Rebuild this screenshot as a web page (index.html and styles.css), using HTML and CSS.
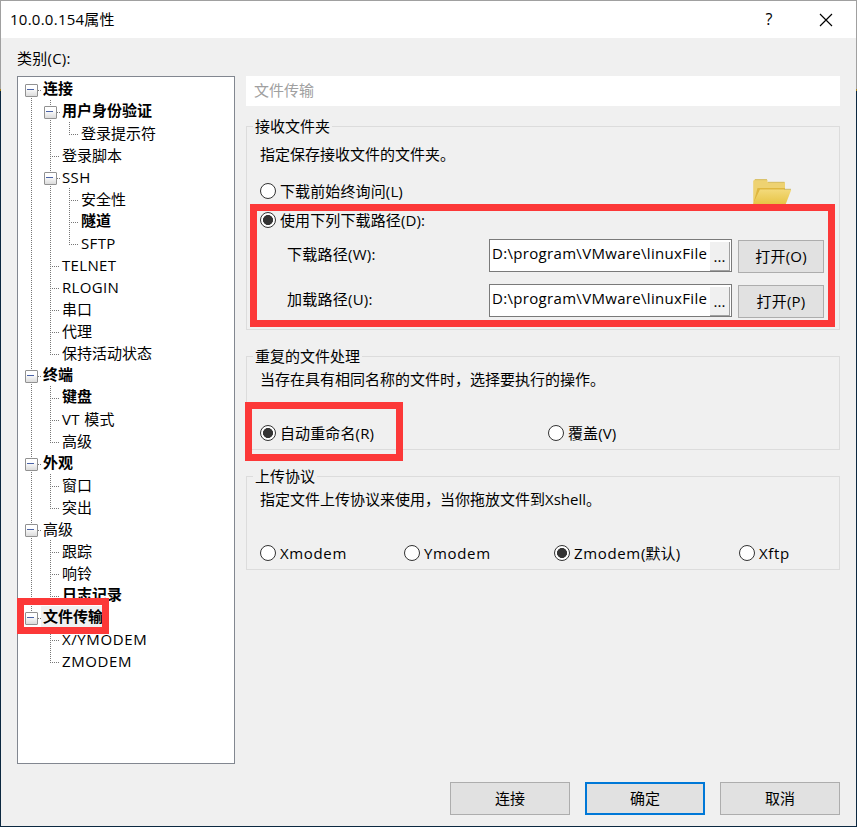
FILE: index.html
```html
<!DOCTYPE html>
<html lang="zh-CN">
<head>
<meta charset="utf-8">
<title>10.0.0.154属性</title>
<link rel="stylesheet" href="styles.css">
</head>
<body>
<div class="window">
  <header class="titlebar">
    <span class="title">10.0.0.154属性</span>
    <span class="help">?</span>
    <svg class="close" width="14" height="14" viewBox="0 0 14 14"><path d="M1 1L13 13M13 1L1 13" stroke="#000" stroke-width="1.15" fill="none"/></svg>
  </header>
  <div class="category">类别(C):</div>
  <main class="content">
    <div class="tree">
      <div class="row bold"><i class="g box first"></i><span>连接</span></div>
      <div class="row bold"><i class="g v"></i><i class="g box"></i><span>用户身份验证</span></div>
      <div class="row"><i class="g v"></i><i class="g v"></i><i class="g end"></i><span>登录提示符</span></div>
      <div class="row"><i class="g v"></i><i class="g tee"></i><span>登录脚本</span></div>
      <div class="row latin"><i class="g v"></i><i class="g box"></i><span>SSH</span></div>
      <div class="row"><i class="g v"></i><i class="g v"></i><i class="g tee"></i><span>安全性</span></div>
      <div class="row bold"><i class="g v"></i><i class="g v"></i><i class="g tee"></i><span>隧道</span></div>
      <div class="row latin"><i class="g v"></i><i class="g v"></i><i class="g end"></i><span>SFTP</span></div>
      <div class="row latin"><i class="g v"></i><i class="g tee"></i><span>TELNET</span></div>
      <div class="row latin"><i class="g v"></i><i class="g tee"></i><span>RLOGIN</span></div>
      <div class="row"><i class="g v"></i><i class="g tee"></i><span>串口</span></div>
      <div class="row"><i class="g v"></i><i class="g tee"></i><span>代理</span></div>
      <div class="row"><i class="g v"></i><i class="g end"></i><span>保持活动状态</span></div>
      <div class="row bold"><i class="g box"></i><span>终端</span></div>
      <div class="row bold"><i class="g v"></i><i class="g tee"></i><span>键盘</span></div>
      <div class="row latin"><i class="g v"></i><i class="g tee"></i><span>VT 模式</span></div>
      <div class="row"><i class="g v"></i><i class="g end"></i><span>高级</span></div>
      <div class="row bold"><i class="g box"></i><span>外观</span></div>
      <div class="row"><i class="g v"></i><i class="g tee"></i><span>窗口</span></div>
      <div class="row"><i class="g v"></i><i class="g end"></i><span>突出</span></div>
      <div class="row"><i class="g box"></i><span>高级</span></div>
      <div class="row"><i class="g v"></i><i class="g tee"></i><span>跟踪</span></div>
      <div class="row"><i class="g v"></i><i class="g tee"></i><span>响铃</span></div>
      <div class="row bold"><i class="g v"></i><i class="g end"></i><span>日志记录</span></div>
      <div class="row bold selected"><i class="g box last"></i><span>文件传输</span></div>
      <div class="row modem"><i class="g"></i><i class="g tee"></i><span>X/YMODEM</span></div>
      <div class="row modem"><i class="g"></i><i class="g end"></i><span>ZMODEM</span></div>
      <div class="mark mark-tree"></div>
    </div>
    <div class="panel">
      <div class="heading">文件传输</div>
      <section class="group receive">
        <div class="legend">接收文件夹</div>
        <p class="desc">指定保存接收文件的文件夹。</p>
        <label class="radio ask"><i></i>下载前始终询问(L)
          <svg class="folder" width="40" height="26" viewBox="0 0 40 26">
            <defs><linearGradient id="front" x1="0" y1="0" x2="0" y2="1"><stop offset="0" stop-color="#f3da7b"/><stop offset="1" stop-color="#e6c13f"/></linearGradient></defs>
            <path d="M.5 1.500L2 .3H13L14.500 1V3H31.500L32 4V11L28 27H.2V2Z" fill="#eed271"/>
            <path d="M2 .7H14M15 3.300H31.500" stroke="#d5bd64" stroke-width="1"/>
            <path d="M4.500 9H32V11H7L1 24V22Z" fill="#dfb73e"/>
            <path d="M7 10.500H37.500L38 11.500L32 27H.5V24Z" fill="url(#front)"/>
            <path d="M31 10.300H38" stroke="#ceb864" stroke-width="1"/>
          </svg>
        </label>
        <label class="radio use on"><i></i>使用下列下载路径(D):</label>
        <div class="path first-path"><span class="label">下载路径(W):</span><div class="input"><span>D:\program\VMware\linuxFile</span><b>...</b></div><div class="btn open">打开(O)</div></div>
        <div class="path"><span class="label">加载路径(U):</span><div class="input"><span>D:\program\VMware\linuxFile</span><b>...</b></div><div class="btn open">打开(P)</div></div>
        <div class="mark mark-path"></div>
      </section>
      <section class="group">
        <div class="legend">重复的文件处理</div>
        <p class="desc">当存在具有相同名称的文件时，选择要执行的操作。</p>
        <div class="options dup">
          <label class="radio on"><i></i>自动重命名(R)</label>
          <label class="radio"><i></i>覆盖(V)</label>
        </div>
        <div class="mark mark-rename"></div>
      </section>
      <section class="group">
        <div class="legend">上传协议</div>
        <p class="desc">指定文件上传协议来使用，当你拖放文件到Xshell。</p>
        <div class="options proto">
          <label class="radio"><i></i><span class="wide">Xmodem</span></label>
          <label class="radio"><i></i><span class="wide">Ymodem</span></label>
          <label class="radio on"><i></i><span class="wide">Zmodem</span>(默认)</label>
          <label class="radio"><i></i><span class="wide">Xftp</span></label>
        </div>
      </section>
    </div>
  </main>
  <footer class="actions">
    <div class="btn">连接</div>
    <div class="btn primary">确定</div>
    <div class="btn">取消</div>
  </footer>
</div>
</body>
</html>
```
FILE: styles.css
```css
* { box-sizing: border-box; }
body {
  margin: 0;
  font: 15px/20px "Open Sans", "Noto Sans CJK SC", sans-serif;
  color: #000;
}
.window {
  width: 857px;
  height: 827px;
  padding: 1px;
  background:
    linear-gradient(#f0f0f0, #f0f0f0) 1px 1px / 855px 825px no-repeat,
    linear-gradient(#a0a0a0 0 89px, #a8861f 89px 91px, #0c2840 91px);
}
.titlebar {
  height: 37px;
  background: #fff;
  display: flex;
  align-items: center;
  padding: 0 23px 0 9px;
}
.title { flex: 1; padding-bottom: 1px; letter-spacing: .25px; }
.help { width: 10px; margin-right: 45px; padding-bottom: 1px; font-size: 16px; text-align: center; }
.category { margin: 10px 0 8px 16px; letter-spacing: .25px; }
.content { display: flex; gap: 11px; padding: 0 16px; }
.tree {
  position: relative;
  width: 218px;
  height: 688px;
  border: 1px solid #828790;
  background: #fff;
  padding: 1px 0 0 4px;
}
.row { display: flex; height: 22px; }
.row span { padding-left: 2px; line-height: 22px; white-space: nowrap; }
.row.bold { font-weight: 700; }
.row.bold span { line-height: 20px; }
.row.latin { letter-spacing: .35px; }
.row.modem { letter-spacing: .6px; }
.selected span { background: #f0f0f0; height: 22px; }
.g {
  width: 19px;
  height: 22px;
  flex: none;
  --vd: repeating-linear-gradient(#777 0 1px, transparent 1px 2px);
  --hd: repeating-linear-gradient(90deg, #777 0 1px, transparent 1px 2px);
}
.v { background: var(--vd) 9px 0 / 1px 22px no-repeat; }
.tee { background: var(--vd) 9px 0 / 1px 22px no-repeat, var(--hd) 9px 12px / 9px 1px no-repeat; }
.end { background: var(--vd) 9px 0 / 1px 13px no-repeat, var(--hd) 9px 12px / 9px 1px no-repeat; }
.box {
  padding: 6px 0 0 3px;
  background: var(--vd) 9px 0 / 1px 22px no-repeat, var(--hd) 16px 12px / 3px 1px no-repeat;
}
.box.first { background: var(--vd) 9px 14px / 1px 8px no-repeat, var(--hd) 16px 12px / 3px 1px no-repeat; }
.box.last { background: var(--vd) 9px 0 / 1px 8px no-repeat, var(--hd) 16px 12px / 3px 1px no-repeat; }
.box::before {
  content: "";
  display: block;
  width: 11px;
  height: 11px;
  border: 1px solid #919191;
  border-radius: 1px;
  background:
    linear-gradient(#4b63a7, #4b63a7) 1px 4px / 7px 1px no-repeat,
    linear-gradient(#fff 30%, #dcdcdc);
}
.panel { width: 594px; }
.heading {
  height: 30px;
  margin-bottom: 20px;
  padding-left: 8px;
  line-height: 29px;
  background: #fff;
  color: #a0a0a0;
}
.group {
  position: relative;
  height: 94px;
  border: 1px solid #dcdcdc;
  margin-bottom: 26px;
}
.receive { height: 204px; }
.legend {
  width: fit-content;
  margin: -11px 0 0 6px;
  padding: 0 2px;
  background: #f0f0f0;
}
.desc { margin: 3px 0 0 13px; }
.receive .desc { margin-top: 8px; }
.radio { display: flex; align-items: center; height: 20px; white-space: nowrap; letter-spacing: .12px; }
.radio i {
  width: 16px;
  height: 16px;
  margin-right: 4px;
  border: 1px solid #333;
  border-radius: 50%;
  background: #fff;
}
.radio.on i { background: radial-gradient(circle, #333 4.7px, #fff 5.3px); }
.ask { margin: 17px 0 0 13px; }
.folder { margin: 2px 0 0 350px; }
.use { margin: 9px 0 0 13px; }
.path { display: flex; height: 34px; margin: 11px 0 0 40px; }
.path.first-path { margin-top: 9px; }
.label { width: 202px; line-height: 31px; letter-spacing: .25px; }
.input {
  display: flex;
  width: 243px;
  height: 33px;
  padding: 2px 1px 1px 2px;
  border: 1px solid #7a7a7a;
  background: #fff;
  margin-right: 6px;
}
.input span { width: 218px; line-height: 23px; white-space: nowrap; letter-spacing: .32px; }
.input b {
  width: 20px;
  height: 29px;
  border-right: 1px solid #a0a0a0;
  border-bottom: 1px solid #a0a0a0;
  background: #f0f0f0;
  font-weight: 400;
  line-height: 28px;
  text-align: center;
}
.btn {
  height: 33px;
  border: 1px solid #adadad;
  background: #e1e1e1;
  line-height: 31px;
  text-align: center;
}
.open { width: 86px; margin-top: 1px; letter-spacing: .2px; }
.options { display: grid; margin: 34px 0 0 13px; }
.dup { grid-template-columns: 288px auto; }
.proto { grid-template-columns: 144px 150px 185px auto; }
.wide { letter-spacing: .65px; }
.actions { display: flex; justify-content: flex-end; gap: 15px; margin: 18px 16px 0 0; }
.actions .btn { width: 120px; }
.actions .primary { border: 2px solid #0078d7; line-height: 29px; }
.mark { position: absolute; border: 7px solid #fc3838; }
.mark-tree { left: -1px; top: 521px; width: 92px; height: 36px; }
.mark-path { left: 3px; top: 77px; width: 585px; height: 123px; }
.mark-rename { left: -2px; top: 45px; width: 158px; height: 59px; }
```
